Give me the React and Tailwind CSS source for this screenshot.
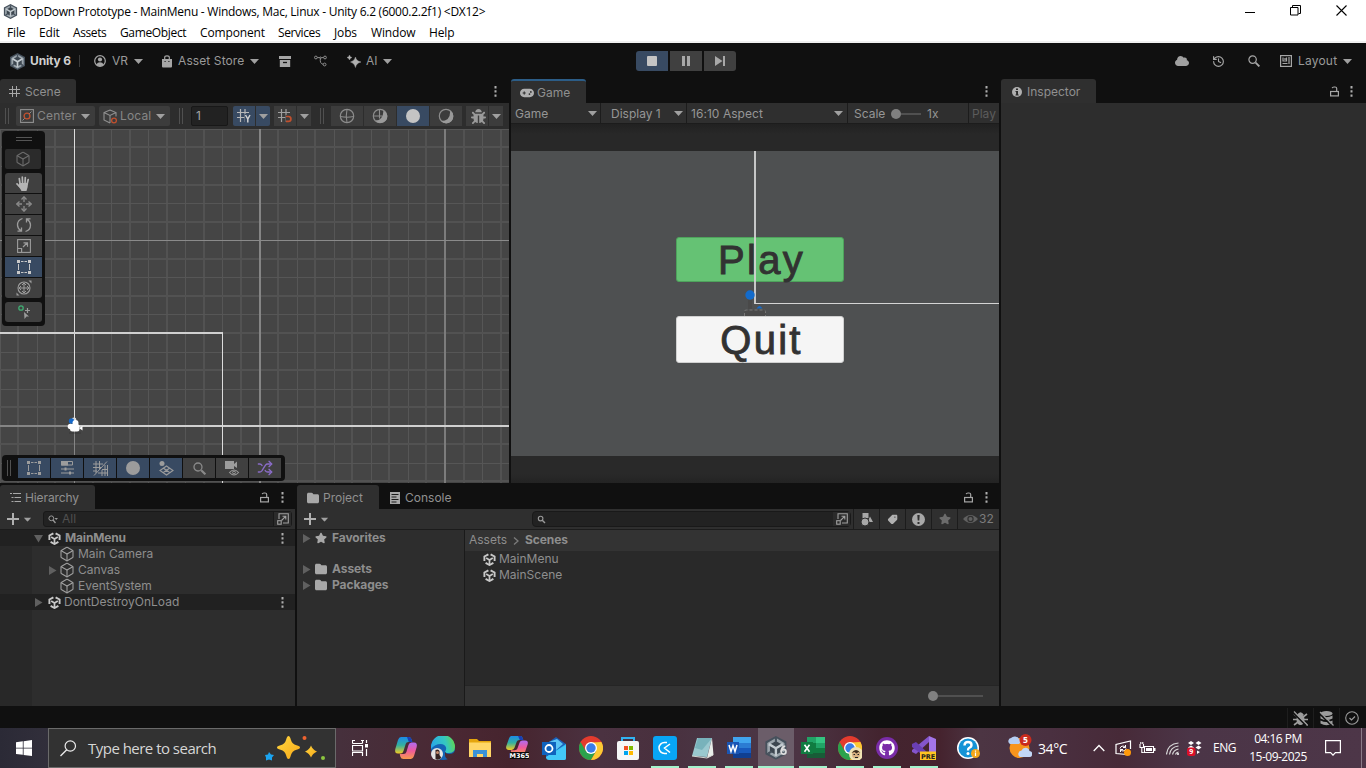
import React from "react";
import { FaHandPaper, FaGithub, FaBug, FaStar, FaCloud } from "react-icons/fa";
import { FaGamepad, FaFolder, FaTag } from "react-icons/fa6";
import { History, Shuffle, Box } from "lucide-react";

function Svg({ w = 16, h = w, vb, className = "", children }) {
  return (
    <svg width={w} height={h} viewBox={vb || `0 0 ${w} ${h}`} fill="none" stroke="none" className={"block shrink-0 " + className}>
      {children}
    </svg>
  );
}

/* A fixed-width slot in a horizontal bar. */
function Slot({ className = "", children }) {
  return <div className={"flex shrink-0 items-center whitespace-nowrap " + className}>{children}</div>;
}

const Caret = ({ className = "" }) => (
  <Svg w={9} h={5} className={className}><path d="M0 0h9L4.5 5z" fill="#a0a0a0" /></Svg>
);
const Kebab = () => (
  <Svg w={3} h={11}><path d="M.5 0h2v2.400h-2zM.5 4.200h2v2.400h-2zM.5 8.400h2v2.400h-2z" fill="#adadad" /></Svg>
);
const Lock = () => (
  <Svg w={9} h={11}>
    <rect x=".6" y="5.5" width="7.8" height="4.4" stroke="#a6a6a6" strokeWidth="1.2" />
    <path d="M6.700 5V2.600Q6.700 1 5 1H4Q2.400 1 2.200 2.200" stroke="#a6a6a6" strokeWidth="1.2" />
  </Svg>
);
const Cube = ({ w = 16, c = "#a0a0a0", className = "-ml-px" }) => <Box width={w} height={w} color={c} strokeWidth={1.6} className={"block shrink-0 " + className} />;
const UnityMark = () => (
  <Svg w={13}>
    <path d="M5.400 1.300L1.400 3.500v4.600M7.600 1.300L11.600 3.500v4.600M2.600 9.900l3.900 2.100 3.900-2.100" stroke="#c8c8c8" strokeWidth="1.900" />
    <path d="M6.500 6.900V12M6.500 6.900L3.200 5M6.500 6.900L9.800 5" stroke="#c8c8c8" strokeWidth="1.700" />
  </Svg>
);
const Fold = ({ open }) => (
  <Svg w={9} h={9}><path d={open ? "M0 1h9L4.5 8.5z" : "M1 0v9L8.5 4.5z"} fill="#606060" /></Svg>
);
const Magnifier = ({ w = 12, c = "#a6a6a6" }) => (
  <Svg w={w} vb="0 0 12 12">
    <circle cx="4.6" cy="4.6" r="3.7" stroke={c} strokeWidth="1.2" />
    <path d="M7.600 7.600l3.800 3.800" stroke={c} strokeWidth="1.9" />
  </Svg>
);
const PopOut = () => (
  <Svg w={12}>
    <path d="M2 6V.7h9.300V10H6" stroke="#a0a0a0" strokeWidth="1.1" />
    <rect x=".7" y="7.7" width="3.5" height="3.5" stroke="#a0a0a0" strokeWidth="1.1" />
    <path d="M4.500 7.500L8.600 3.400M5.500 3.200h3.300v3.300" stroke="#a0a0a0" strokeWidth="1.1" />
  </Svg>
);
const Plus = () => <Svg w={12}><path d="M5 0h2v5h5v2H7v5H5V7H0V5h5z" fill="#b0b0b0" /></Svg>;
const HandleV = () => <Svg w={4} h={16}><path d="M.5 0v16M3.500 0v16" stroke="#505050" /></Svg>;
const RectTool = ({ c = "#c8c8c8" }) => (
  <Svg w={14}>
    <path d="M0 0h3v3H0zM11 0h3v3h-3zM0 11h3v3H0zM11 11h3v3h-3z" fill={c} />
    <path d="M4 1.500h2.500M7.500 1.500H10M4 12.500h2.500M7.500 12.500H10M1.500 4v6M12.500 4v6" stroke={c} />
  </Svg>
);
const HexLogo = ({ w = 17, six }) => (
  <Svg w={w} vb="0 0 17 17">
    <path d="M8.500 0L16 4v9l-7.500 4L1 13V4z" fill="#46515c" />
    <path d="M8.500 2.500L13.700 5.500v6L8.500 14.500L3.300 11.500v-6z" fill="#3c464f" stroke="#9ba5ac" strokeWidth="1.900" />
    <path d="M8.500 8.700v5.600M8.500 8.700L3.500 5.800M8.500 8.700l5-2.900" stroke="#c3cbd0" strokeWidth="1.700" />
    <path d="M8.500 1.500v3M3 12.500l2.500-1.500M14 12.500l-2.500-1.500" stroke="#46515c" strokeWidth="1.500" />
    {six && <circle cx="14" cy="11.300" r="1.700" stroke="#dedede" strokeWidth="1.200" />}
    {six && <path d="M12.300 11.200Q12.400 7.600 15.200 7.200" stroke="#dedede" strokeWidth="1.200" />}
  </Svg>
);

function TitleBar() {
  return (
    <div className="flex h-[23px] shrink-0 items-center bg-white pl-[3px] font-['Open_Sans',sans-serif] text-[12px] text-black">
      <Slot className="w-[20px]"><HexLogo w={15} /></Slot>
      <Slot className="w-[1220px] pt-px text-[12px] tracking-[-0.260px]">TopDown Prototype - MainMenu - Windows, Mac, Linux - Unity 6.2 (6000.2.2f1) &lt;DX12&gt;</Slot>
      <Slot className="ml-[2px] w-[45px]"><Svg w={10} h={10}><path d="M0 5.500h10" stroke="#000" /></Svg></Slot>
      <Slot className="w-[46px]">
        <Svg w={11} className="-mt-[2px]"><path d="M.5 2.500h7.500v7.500H.5zM2.500 2.500v-2h8v8H8.500" stroke="#000" /></Svg>
      </Slot>
      <Slot><Svg w={11} className="-mt-[2px]"><path d="M.5.5l10 10M10.500.5l-10 10" stroke="#000" strokeWidth="1.100" /></Svg></Slot>
    </div>
  );
}

function MenuBar() {
  return (
    <div className="flex h-[20px] shrink-0 items-center border-b-2 border-[#f0f0f0] bg-white pl-[7px] pt-[2px] font-['Open_Sans',sans-serif] text-[12px] tracking-[-0.150px] text-black">
      <Slot className="w-[32px]">File</Slot>
      <Slot className="w-[34px]">Edit</Slot>
      <Slot className="w-[47px] tracking-[-0.400px]">Assets</Slot>
      <Slot className="w-[80px] tracking-[-0.350px]">GameObject</Slot>
      <Slot className="w-[78px]">Component</Slot>
      <Slot className="w-[56px] tracking-[-0.400px]">Services</Slot>
      <Slot className="w-[37px]">Jobs</Slot>
      <Slot className="w-[58px]">Window</Slot>
      <Slot>Help</Slot>
    </div>
  );
}

function MainToolbar() {
  return (
    <div className="flex h-9 shrink-0 items-center bg-[#101010] pl-[9px] text-[12px] text-[#9a9a9a]">
      <Slot className="w-[21px]"><HexLogo /></Slot>
      <Slot className="w-[49px] text-[12px] font-bold tracking-[-0.150px] text-[#cfcfcf]">Unity 6</Slot>
      <Slot className="w-[15px]"><div className="h-3 w-px bg-[#3c3c3c]" /></Slot>
      <Slot className="w-[18px]">
        <Svg w={12}>
          <circle cx="6" cy="6" r="5.300" stroke="#a6a6a6" strokeWidth="1.200" />
          <circle cx="6" cy="4.500" r="2.100" fill="#a6a6a6" />
          <path d="M2.300 9.500Q3.500 7.300 6 7.300t3.700 2.200Q8 11.300 6 11.300T2.300 9.500z" fill="#a6a6a6" />
        </Svg>
      </Slot>
      <Slot className="w-[22px]">VR</Slot>
      <Slot className="w-[28px]"><Caret /></Slot>
      <Slot className="w-[16px]">
        <Svg w={10} h={13}>
          <path d="M0 4h10v7.500q0 1-1 1H1q-1 0-1-1z" fill="#a6a6a6" />
          <path d="M2.700 5V2.300Q2.700.8 5 .8t2.300 1.500V5" stroke="#a6a6a6" strokeWidth="1.200" />
          <path d="M2.500 6.500h1.200M6.300 6.500h1.200" stroke="#222" />
        </Svg>
      </Slot>
      <Slot className="w-[72px] tracking-[0.100px]">Asset Store</Slot>
      <Slot className="w-[29px]"><Caret /></Slot>
      <Slot className="w-[35px]">
        <Svg w={12} h={11}><path d="M0 0h12v3H0zM.8 4h10.400v7H.8z" fill="#a6a6a6" /><path d="M4 6.500h4" stroke="#161616" strokeWidth="1.300" /></Svg>
      </Slot>
      <Slot className="w-[33px]">
        <Svg w={13} h={12}>
          <g stroke="#8e8e8e"><circle cx="1.900" cy="2.500" r="1.400" /><circle cx="11" cy="2.500" r="1.400" /><circle cx="10.600" cy="9.500" r="1.400" /><circle cx="6.500" cy="2.800" r=".8" /><path d="M3.300 2.600h2.500M7.300 2.600h2.300M6.400 3.500Q5.500 8.500 9.200 9.300" /></g>
        </Svg>
      </Slot>
      <Slot className="w-[19px]">
        <Svg w={14} h={13}>
          <path d="M8.500 2q.7 4 5.500 5-4.800 1-5.500 5.500Q7.600 8 3.500 7q4.100-1 5-5zM2.500 0q.3 2 2.400 2.500Q2.800 3 2.500 5 2.200 3 0 2.500 2.200 2 2.500 0z" fill="#b0b0b0" stroke="#b0b0b0" strokeWidth=".4" />
        </Svg>
      </Slot>
      <Slot className="w-[17px]">AI</Slot>
      <Slot className="w-[253px]"><Caret /></Slot>
      <Slot className="h-5 w-8 justify-center rounded-l-[3px] bg-[#384a62]"><div className="h-[10px] w-[10px] rounded-[1px] bg-[#c4c4c4]" /></Slot>
      <Slot className="ml-[2px] h-5 w-8 justify-center gap-[2px] bg-[#404040]">
        <div className="h-[10px] w-[3px] bg-[#a8a8a8]" /><div className="h-[10px] w-[3px] bg-[#a8a8a8]" />
      </Slot>
      <Slot className="ml-[2px] h-5 w-8 justify-center rounded-r-[3px] bg-[#404040]">
        <Svg w={10} h={10}><path d="M0 0l7.500 5L0 10zM8 0h2v10H8z" fill="#a8a8a8" /></Svg>
      </Slot>
      <Slot className="ml-[439px] w-[37px]"><FaCloud size={14} color="#a0a0a0" /></Slot>
      <Slot className="w-[36px]"><History size={13} color="#a6a6a6" strokeWidth={2.100} /></Slot>
      <Slot className="w-[32px]"><Magnifier /></Slot>
      <Slot className="w-[18px]">
        <Svg w={12}>
          <rect x=".6" y=".6" width="10.800" height="10.800" stroke="#a6a6a6" strokeWidth="1.200" />
          <path d="M3 2.500v3.500h3.500V2.500M9 2v7M2.500 8.500h5M5 3v2" stroke="#a6a6a6" strokeWidth="1.200" />
        </Svg>
      </Slot>
      <Slot className="w-[45px] tracking-[0.200px]">Layout</Slot>
      <Caret />
    </div>
  );
}

const Wire = ({ kind }) => (
  <Svg w={16}>
    {kind === "fill" ? <circle cx="8" cy="8" r="7" fill="#c4c4c4" /> : <circle cx="8" cy="8" r="6.700" stroke="#8c8c8c" strokeWidth="1.200" />}
    {kind === "wire" && <path d="M1.500 8.500Q8 10 14.500 8.500M8 1.500Q6.500 8 8 14.500" stroke="#8c8c8c" strokeWidth="1.100" />}
    {kind === "shade" && <path d="M11.500 2.500A6.600 6.600 0 1 1 3.500 12.500Q11 12.500 11.500 2.500z" fill="#9a9a9a" />}
    {kind === "shade" && <path d="M1.500 8h9M7.500 1.500v9" stroke="#8c8c8c" strokeWidth="1.100" />}
    {kind === "ball" && <path d="M12 2.500A7 7 0 1 1 3 13Q13 13 12 2.500z" fill="#9a9a9a" />}
  </Svg>
);

const hash = "M3.500 0v13M8 0v13M0 3.500h12M0 8.500h12";

function SceneToolbar() {
  const btn = "h-5 bg-[#3c3c3c] justify-center ";
  return (
    <div className="flex h-[26px] shrink-0 items-center bg-[#2d2d2d] pl-[5px] text-[12px] text-[#868686]">
      <Slot className="w-[11px]"><HandleV /></Slot>
      <Slot className="h-5 w-[79px] rounded-[2px] bg-[#3c3c3c] pl-1">
        <Svg w={14}>
          <rect x=".6" y=".6" width="12.800" height="12.800" stroke="#909090" strokeWidth="1.100" />
          <circle cx="7" cy="7" r="2.900" stroke="#c0502e" strokeWidth="1.400" />
          <path d="M2.500 11.500l2.200-2.200M9.300 4.700l2.200-2.200" stroke="#909090" />
        </Svg>
        <span className="ml-[3px] w-[44px] tracking-[0.200px]">Center</span><Caret />
      </Slot>
      <Slot className="ml-1 h-5 w-[71px] rounded-[2px] bg-[#3c3c3c] pl-1">
        <Svg w={15}>
          <path d="M7 1l6 2.600v4M7 1L1 3.600V11l6 3M1 3.600L7 6.500l6-2.900M7 6.500V14" stroke="#909090" strokeWidth="1.100" />
          <circle cx="11" cy="11.500" r="2.400" stroke="#c0502e" strokeWidth="1.300" />
        </Svg>
        <span className="ml-[2px] w-[36px] tracking-[0.150px]">Local</span><Caret />
      </Slot>
      <Slot className="ml-[9px] w-[12px]"><HandleV /></Slot>
      <Slot className="h-5 w-[37px] rounded-[2px] border border-[#181818] bg-[#222] pl-1 text-[#a5a5a5]">1</Slot>
      <Slot className="ml-[5px] h-5 w-[22px] justify-center rounded-l-[2px] bg-[#384a62]">
        <Svg w={14}><path d={hash} stroke="#b8b8b8" strokeWidth="1.200" /><path d="M7.500 5h6.500v9H7.500z" fill="#384a62" /><path d="M8.500 6l2.300 4L13 6M10.800 10v3.500" stroke="#d0d0d0" strokeWidth="1.500" /></Svg>
      </Slot>
      <Slot className="ml-px h-5 w-[14px] justify-center rounded-r-[2px] bg-[#384a62]"><Caret /></Slot>
      <Slot className={btn + "ml-1 w-[22px]"}>
        <Svg w={14}><path d={hash} stroke="#a0a0a0" strokeWidth="1.200" /><path d="M7.500 6H14v8H7.500z" fill="#3c3c3c" /><path d="M8 7.500h2.500a2.200 2.200 0 0 1 0 4.800H8" stroke="#c0502e" strokeWidth="1.700" /></Svg>
      </Slot>
      <Slot className={btn + "ml-px w-[14px]"}><Caret /></Slot>
      <Slot className="ml-[9px] w-[11px]"><HandleV /></Slot>
      <Slot className={btn + "w-8"}><Wire kind="wire" /></Slot>
      <Slot className={btn + "ml-px w-8"}><Wire kind="shade" /></Slot>
      <Slot className="ml-px h-5 w-8 justify-center bg-[#384a62]"><Wire kind="fill" /></Slot>
      <Slot className={btn + "ml-px w-8"}><Wire kind="ball" /></Slot>
      <Slot className={btn + "ml-1 w-[22px] pl-[3px]"}><FaBug size={15} color="#9a9a9a" /></Slot>
      <Slot className={btn + "ml-px w-[14px]"}><Caret /></Slot>
    </div>
  );
}

function SceneGrid() {
  const lines = [];
  for (let i = -4; i < 24; i++) {
    const x = 74 + i * 18.55;
    if (i !== 0 && i !== 10 && i !== 20) lines.push(<rect key={"v" + i} x={Math.round(x) - (i % 2 ? 1 : 0)} y="129" width={i % 2 ? 2 : 1} height="354" fill={i % 2 ? "#525252" : "#565656"} />);
  }
  for (let j = -3; j < 17; j++) {
    const y = 425.7 - j * 18.55;
    if (j !== 0 && j !== 10) lines.push(<rect key={"h" + j} x="0" y={Math.round(y) - (j % 2 ? 1 : 0)} width="509" height={j % 2 ? 2 : 1} fill={j % 2 ? "#525252" : "#565656"} />);
  }
  return (
    <svg width="509" height="354" viewBox="0 129 509 354" className="absolute inset-0" shapeRendering="crispEdges">
      <rect x="0" y="129" width="509" height="354" fill="#454545" />
      {lines}
      <rect x="259" y="129" width="2" height="354" fill="#858585" />
      <rect x="444" y="129" width="2" height="354" fill="#7c7c7c" />
      <rect x="0" y="240" width="509" height="1" fill="#8a8a8a" />
      <rect x="0" y="425" width="74" height="2" fill="#858585" />
      <rect x="74" y="426" width="1" height="57" fill="#858585" />
      <rect x="74" y="129" width="1" height="297" fill="#dcdcdc" />
      <rect x="74" y="425" width="435" height="2" fill="#d0d0d0" />
      <rect x="0" y="332" width="223" height="2" fill="#d0d0d0" />
      <rect x="222" y="333" width="1" height="150" fill="#dcdcdc" />
      <g shapeRendering="auto">
        <circle cx="74" cy="420" r="2.400" fill="#ddd" /><circle cx="71.500" cy="421" r="2.700" fill="#1769c9" />
        <circle cx="75.500" cy="423" r="3" fill="#fff" /><circle cx="70.500" cy="426.500" r="2.800" fill="#fff" />
        <rect x="70" y="424" width="9.500" height="7.500" rx="2.500" fill="#fff" /><path d="M79 428l3.500-2v4.500z" fill="#fff" />
        <path d="M69 433h12" stroke="#333" strokeWidth="1" opacity=".6" />
      </g>
    </svg>
  );
}

const toolBtn = "h-5 w-[37px] justify-center ";
const g = "#9c9c9c";

function ToolPalette() {
  return (
    <div className="absolute left-[2px] top-[2px] flex h-[195px] w-[43px] flex-col items-start rounded-[4px] bg-[#101010] pl-[3px]">
      <Svg w={16} h={4} className="ml-[11px] mt-[6px]"><path d="M0 .5h16M0 3.500h16" stroke="#555" /></Svg>
      <Slot className="mt-[8px] h-5 w-9 justify-center rounded-[2px] bg-[#2b2b2b]"><Cube c="#6c6c6c" className="" /></Slot>
      <div className="mt-1 flex flex-col gap-px">
        <Slot className={toolBtn + "rounded-t-[3px] bg-[#404040]"}>
          <Svg w={15}>
            <path d="M4.200 8.500L3.300 2.500M6.600 7.500L6.300 1.200M9 7.500L9.300 1.500M11 8.500L12.200 3.500M3.500 10.500L1 7.800" stroke="#b4b4b4" strokeWidth="1.700" strokeLinecap="round" />
            <path d="M3.400 7h8.600q0 4.500-1.500 8H5.500Q4.500 13 2.500 10.500z" fill="#b4b4b4" />
          </Svg>
        </Slot>
        <Slot className={toolBtn + "bg-[#404040]"}>
          <Svg w={16}><path d="M8 2v4M8 10v4M2 8h4M10 8h4" stroke="#8c8c8c" strokeWidth="1.300" /><path d="M5.500 3.500L8 .8l2.500 2.700M5.500 12.500L8 15.200l2.500-2.700M3.500 5.500L.8 8l2.700 2.500M12.500 5.500L15.200 8l-2.700 2.500" stroke="#8c8c8c" strokeWidth="1.300" /></Svg>
        </Slot>
        <Slot className={toolBtn + "bg-[#404040]"}>
          <Svg w={16}><path d="M6.500 1.500Q1.500 3 1.500 8q0 3.500 3.500 5.800M9.500 14.500q5-1.500 5-6.500 0-3.500-3.500-5.800M1.500 14.200h4V10.500M14.500 1.800h-4v3.700" stroke={g} strokeWidth="1.300" /></Svg>
        </Slot>
        <Slot className={toolBtn + "bg-[#404040]"}>
          <Svg w={14}><rect x=".6" y=".6" width="12.800" height="12.800" stroke={g} strokeWidth="1.100" /><path d="M.6 9.500h4v4M6 8l4-4M6.500 3.800h4v4" stroke={g} strokeWidth="1.200" /></Svg>
        </Slot>
        <Slot className={toolBtn + "bg-[#384a62]"}><RectTool /></Slot>
        <Slot className={toolBtn + "rounded-b-[3px] bg-[#404040]"}>
          <Svg w={16}><circle cx="8" cy="8" r="6" stroke={g} strokeWidth="1.100" /><path d="M8 3v10M3 8h10M6 5l2-2 2 2M6 11l2 2 2-2M5 6L3 8l2 2M11 6l2 2-2 2" stroke={g} /><path d="M12.500.5h3v3zM.5 12.500v3h3z" fill={g} /></Svg>
        </Slot>
      </div>
      <Slot className={toolBtn + "mt-1 rounded-[3px] bg-[#404040]"}>
        <Svg w={14}><circle cx="4" cy="3" r="2.200" stroke="#3fae73" strokeWidth="1.300" /><path d="M10.500 3v5M8 5.500h5" stroke={g} strokeWidth="1.200" /><path d="M7 7l5 4.500H9.500L7.500 14z" fill={g} /></Svg>
      </Slot>
    </div>
  );
}

function OverlayBar() {
  const b = "h-5 w-8 justify-center ";
  const on = b + "bg-[#384a62]";
  const off = b + "bg-[#404040]";
  return (
    <div className="absolute bottom-[2px] left-[2px] flex h-[26px] w-[283px] items-center gap-px rounded-[4px] bg-[#101010] pl-[5px]">
      <Slot className="w-[10px]"><HandleV /></Slot>
      <Slot className={on}><RectTool c={g} /></Slot>
      <Slot className={on}><Svg w={13} h={14}><path d="M.5.5h11v3.500H.5z" stroke={g} /><path d="M0 0h7v4.500H0z" fill={g} /><path d="M0 8h13M0 12h13" stroke={g} /><path d="M3.500 6.500h2v3h-2zM8 10.500h2v3H8z" fill={g} /></Svg></Slot>
      <Slot className={on}><Svg w={15}><path d="M3 0v12M6.500 0v8M0 3h10M0 6.500h8M0 10h4M9 9v6M12 4v11M14.500 4v11M5 12h10M9 8.500h6M1 14.500L14 .5" stroke={g} strokeWidth="1" /></Svg></Slot>
      <Slot className={on}><Svg w={14}><circle cx="7" cy="7" r="7" fill={g} /></Svg></Slot>
      <Slot className={on}><Svg w={15}><circle cx="3" cy="2.500" r="2.500" fill={g} /><path d="M7.500 5L14 9.500 7.500 14 1 9.500zM4.500 7.300l6.500 4.500M10.500 7.300L4 11.800" stroke={g} strokeWidth="1.100" /></Svg></Slot>
      <Slot className={off}><Magnifier w={13} c="#8a8a8a" /></Slot>
      <Slot className={off}><Svg w={15}><path d="M0 0h9v3l3-2.500v6.500L9 5v3H0z" fill={g} /><path d="M4.500 11.500q4.500-5 9 0-4.500 5-9 0z" fill="#404040" stroke={g} strokeWidth="1.100" /><circle cx="9" cy="11.500" r="1.400" stroke={g} /></Svg></Slot>
      <Slot className={off + " pr-px"}><Shuffle size={16} color="#8a6cc8" strokeWidth={2} /></Slot>
    </div>
  );
}

function Tab({ className = "", children }) {
  return <Slot className={"h-6 rounded-t-[3px] bg-[#2f2f2f] pt-px text-[12px] text-[#909090] " + className}>{children}</Slot>;
}

function ScenePanel() {
  return (
    <div className="flex w-[509px] flex-col">
      <div className="flex h-6 items-center">
        <Tab className="w-[76px] pl-[9px]">
          <Svg w={11} className="mr-[5px]"><path d="M3.500 0v11M7.500 0v11M0 3.500h11M0 7.500h11" stroke="#a8a8a8" /></Svg>Scene
        </Tab>
        <Slot className="ml-[418px]"><Kebab /></Slot>
      </div>
      <SceneToolbar />
      <div className="relative h-[354px]"><SceneGrid /><ToolPalette /><OverlayBar /></div>
    </div>
  );
}

function GamePanel() {
  const cell = "h-5 border-r border-[#1c1c1c] pt-px ";
  return (
    <div className="flex w-[488px] flex-col overflow-hidden">
      <div className="flex h-6 items-center">
        <Tab className="w-[75px] border-t-2 border-[#2c5d87] pl-[9px]"><FaGamepad size={14} color="#b0b0b0" className="mr-[3px]" />Game</Tab>
        <Slot className="ml-[399px]"><Kebab /></Slot>
      </div>
      <div className="flex h-5 shrink-0 items-center bg-[#2f2f2f] text-[12px] text-[#969696]">
        <Slot className={cell + "w-[90px] pl-1"}><span className="w-[73px]">Game</span><Caret /></Slot>
        <Slot className={cell + "w-[86px] pl-[10px]"}><span className="w-[63px]">Display 1</span><Caret /></Slot>
        <Slot className={cell + "w-[161px] pl-1"}><span className="w-[143px] tracking-[0.050px]">16:10 Aspect</span><Caret /></Slot>
        <Slot className={cell + "w-[121px] pl-[6px]"}>
          <span className="w-[37px]">Scale</span>
          <div className="h-[10px] w-[10px] rounded-full bg-[#808080]" /><div className="h-[2px] w-5 bg-[#505050]" />
          <span className="ml-[6px]">1x</span>
        </Slot>
        <Slot className="pl-[3px] pt-px text-[#5c5c5c]">Play</Slot>
      </div>
      <div className="h-[28px] border-t border-[#1c1c1c] bg-[linear-gradient(#212121,#282828_10px)]" />
      <div className="relative flex h-[305px] flex-col items-center bg-[#4e5051] pl-[10px] pt-[86px] font-['Liberation_Sans',Arial,sans-serif] text-[40px] leading-none tracking-[2.300px] text-[#323232]">
        <div className="flex h-[45px] w-[168px] items-center justify-center rounded-[3px] border border-[#4ea35c] bg-[#65c274] pl-[3px] pt-px [-webkit-text-stroke:0.9px_#323232]">Play</div>
        <div className="mt-[34px] flex h-[47px] w-[168px] items-center justify-center rounded-[3px] border border-[#d0d0d0] bg-[#f5f5f5] pl-[3px] [-webkit-text-stroke:0.9px_#323232]">Quit</div>
        <svg width="488" height="305" viewBox="511 151 488 305" className="absolute inset-0">
          <rect x="754" y="151" width="2" height="153" fill="#d4d4d4" opacity=".9" />
          <rect x="755" y="303" width="244" height="1" fill="#d4d4d4" />
          <circle cx="750" cy="295" r="4.700" fill="#136bcb" />
          <path d="M756.500 308.500q3-5 6 0z" fill="#136bcb" />
          <path d="M750 300v9" stroke="#494949" strokeWidth="4" />
          <path d="M744.500 316v-4.500q0-1.500 2-1.500h17q2 0 2 1.500v4.500" stroke="#777" strokeDasharray="3 2" fill="#4a4a4a" />
        </svg>
      </div>
      <div className="h-[27px] bg-[linear-gradient(#292929_18px,#232323)]" />
    </div>
  );
}

function HierarchyRow({ children, dark, kebab }) {
  return (
    <div className={"flex h-4 shrink-0 items-center text-[12px] " + (dark ? "bg-[#212121]" : "bg-[linear-gradient(90deg,#282828_32px,#2d2d2d_32px)]")}>
      <div className="flex w-[281px] items-center whitespace-nowrap">{children}</div>
      {kebab && <Kebab />}
    </div>
  );
}

function Hierarchy() {
  return (
    <div className="flex w-[295px] flex-col text-[#8e8e8e]">
      <div className="flex h-6 items-center">
        <Tab className="w-[95px] pl-[10px]">
          <Svg w={11} h={9} className="mr-[4px]"><path d="M0 .5h2M3 .5h8M1.500 4.500h2M4.500 4.500H11M1.500 8.500h2M4.500 8.500H11" stroke="#a8a8a8" strokeWidth="1.200" /></Svg><span className="tracking-[-0.100px]">Hierarchy</span>
        </Tab>
        <Slot className="ml-[165px] w-[21px] pt-px"><Lock /></Slot><Kebab />
      </div>
      <div className="flex h-[21px] shrink-0 items-center border-b border-[#1c1c1c] bg-[#2f2f2f] pl-[7px]">
        <Slot className="w-4"><Plus /></Slot><Slot className="w-[20px]"><Caret className="scale-[.85]" /></Slot>
        <Slot className="h-4 w-[249px] rounded-[3px] border border-[#191919] bg-[#222] pl-1 text-[12px] text-[#505050]">
          <Svg w={10} h={9}><circle cx="3.300" cy="3.300" r="2.400" stroke="#999" /><path d="M5 5l2.500 3" stroke="#999" strokeWidth="1.300" /><path d="M6.500 3H10L8.200 5z" fill="#999" /></Svg>
          <span className="ml-[4px] w-[211px]">All</span>
          <div className="flex h-[14px] w-[18px] items-center justify-center border-l border-[#191919] bg-[#2b2b2b]"><PopOut /></div>
        </Slot>
      </div>
      <HierarchyRow dark kebab>
        <Slot className="w-[48px] pl-[34px]"><Fold open /></Slot><Slot className="w-[17px]"><UnityMark /></Slot><span className="font-bold tracking-[-0.150px]">MainMenu</span>
      </HierarchyRow>
      <HierarchyRow><Slot className="ml-[60px] w-[18px]"><Cube /></Slot>Main Camera</HierarchyRow>
      <HierarchyRow><Slot className="ml-[48px] w-[12px]"><Fold /></Slot><Slot className="w-[18px]"><Cube /></Slot>Canvas</HierarchyRow>
      <HierarchyRow><Slot className="ml-[60px] w-[18px]"><Cube /></Slot>EventSystem</HierarchyRow>
      <HierarchyRow dark kebab>
        <Slot className="w-[48px] pl-[34px]"><Fold /></Slot><Slot className="w-[16px]"><UnityMark /></Slot>DontDestroyOnLoad
      </HierarchyRow>
      <div className="flex-1 bg-[linear-gradient(90deg,#282828_32px,#2d2d2d_32px)]" />
    </div>
  );
}

function Project() {
  const ic = "h-5 w-[26px] justify-center border-l border-[#1c1c1c]";
  return (
    <div className="flex w-[702px] flex-col text-[12px] text-[#8e8e8e]">
      <div className="flex h-6 items-center">
        <Tab className="w-[82px] pl-[10px]"><FaFolder size={12} color="#a8a8a8" className="mr-[4px]" />Project</Tab>
        <Slot className="w-[582px] pl-[11px] pt-px text-[#909090]">
          <Svg w={10} h={12} className="mr-[5px]"><path d="M0 0h10v12H0z" fill="#a8a8a8" /><path d="M1.500 2.500h7M1.500 5h5M1.500 7.500h7M1.500 10h5" stroke="#1a1a1a" /></Svg>Console
        </Slot>
        <Slot className="ml-[3px] w-[21px] pt-px"><Lock /></Slot><Kebab />
      </div>
      <div className="flex h-[21px] shrink-0 items-center border-b border-[#1c1c1c] bg-[#2f2f2f] pl-[7px]">
        <Slot className="w-4"><Plus /></Slot><Slot className="w-[212px]"><Caret className="scale-[.85]" /></Slot>
        <Slot className="h-4 w-[319px] rounded-[4px] border border-[#191919] bg-[#222] pl-1">
          <Svg w={9} className="mr-[287px]"><circle cx="3.600" cy="3.600" r="2.300" stroke="#999" strokeWidth="1.100" /><path d="M5 5l3 3" stroke="#999" strokeWidth="1.400" /></Svg>
          <div className="flex h-[14px] w-[17px] items-center justify-center bg-[#2b2b2b]"><PopOut /></div>
        </Slot>
        <Slot className={ic + " ml-[2px]"}><Svg w={12} h={13}><path d="M1.500 0h6v5h-6z" fill="#a8a8a8" /><path d="M9 3.500l3 5.500H6.500z" fill="#a8a8a8" /><circle cx="4" cy="9" r="4" fill="#a8a8a8" stroke="#2f2f2f" /></Svg></Slot>
        <Slot className={ic}><FaTag size={11} color="#b0b0b0" className="rotate-90" /></Slot>
        <Slot className={ic}><Svg w={13}><circle cx="6.500" cy="6.500" r="6.500" fill="#a8a8a8" /><path d="M5.300 2h2.400L7.300 7.500H5.700zM5.500 9h2v2h-2z" fill="#2f2f2f" /></Svg></Slot>
        <Slot className={ic}><FaStar size={12} color="#6c6c6c" /></Slot>
        <Slot className="h-5 border-l border-[#1c1c1c] pl-[5px] text-[#7c7c7c]">
          <Svg w={15} h={10}><path d="M0 5q7.500-8 15 0-7.500 8-15 0z" fill="#606060" /><circle cx="7.500" cy="5" r="3.200" fill="#2f2f2f" /><circle cx="7.500" cy="5" r="2" fill="#606060" /></Svg>
          <span className="ml-[1px]">32</span>
        </Slot>
      </div>
      <div className="flex flex-1">
        <div className="flex w-[168px] flex-col border-r border-[#1a1a1a] bg-[#2d2d2d] pl-[5px] font-bold tracking-[-0.080px]">
          <div className="mb-[15px] flex h-4 items-center"><Slot className="w-[13px]"><Fold /></Slot><Slot className="w-[17px]"><FaStar size={12} color="#a8a8a8" /></Slot>Favorites</div>
          <div className="flex h-4 items-center"><Slot className="w-[13px]"><Fold /></Slot><Slot className="w-[17px]"><FaFolder size={12} color="#a8a8a8" /></Slot>Assets</div>
          <div className="flex h-4 items-center"><Slot className="w-[13px]"><Fold /></Slot><Slot className="w-[17px]"><FaFolder size={12} color="#a8a8a8" /></Slot>Packages</div>
        </div>
        <div className="flex flex-1 flex-col bg-[#292929]">
          <div className="flex h-[21px] items-center bg-[#333] pb-[2px] pl-1">
            <Slot className="w-[44px]">Assets</Slot>
            <Slot className="w-[12px] pt-[2px]"><Svg w={6} h={8}><path d="M1 .5L5 4 1 7.500" stroke="#7c7c7c" strokeWidth="1.300" /></Svg></Slot>
            <span className="font-bold tracking-[-0.080px]">Scenes</span>
          </div>
          <div className="flex h-4 items-center pl-[18px]"><Slot className="w-[16px]"><UnityMark /></Slot>MainMenu</div>
          <div className="flex h-4 items-center pl-[18px]"><Slot className="w-[16px]"><UnityMark /></Slot>MainScene</div>
          <div className="mt-auto flex h-[21px] items-center border-t border-[#252525] bg-[#333] pl-[463px]">
            <div className="h-[10px] w-[10px] shrink-0 rounded-full bg-[#808080]" /><div className="h-[2px] w-[45px] bg-[#505050]" />
          </div>
        </div>
      </div>
    </div>
  );
}

function Inspector() {
  return (
    <div className="flex w-[365px] flex-col">
      <div className="flex h-6 items-center">
        <Tab className="w-[95px] pl-[11px]">
          <Svg w={10} className="mr-[5px]"><circle cx="5" cy="5" r="5" fill="#b0b0b0" /><path d="M4 1.500h2v1.600H4zM3.500 4H6v3.500h.7v1H3.500v-1h.6V5h-.6z" fill="#2a2a2a" /></Svg>Inspector
        </Tab>
        <Slot className="ml-[234px] w-[20px]"><Lock /></Slot><Kebab />
      </div>
      <div className="flex-1 bg-[#2d2d2d]" />
    </div>
  );
}

function StatusBar() {
  const c = "h-5 w-[26px] justify-center border-l border-[#1e1e1e]";
  return (
    <div className="flex h-[22px] shrink-0 items-center justify-end bg-[#101010] pr-px pt-[2px]">
      <Slot className={c + " pr-px"}><Svg w={15}><ellipse cx="7.500" cy="8.500" rx="4" ry="5.500" fill={g} /><path d="M4 4Q7.500-1.500 11 4z" fill={g} /><path d="M0 8.500h15M1 3l4 3M14 3l-4 3M1 14l4-3M14 14l-4-3" stroke={g} strokeWidth="1.600" /><path d="M0 1.500l13 13" stroke="#101010" strokeWidth="1.600" /><path d="M1 .5l14 14" stroke={g} strokeWidth="1.200" /></Svg></Slot>
      <Slot className={c + " pr-px"}><Svg w={15}><ellipse cx="7.500" cy="2.500" rx="6" ry="2.400" fill={g} /><path d="M1.500 4.500Q7.500 8 13.500 4.500v3Q7.500 10.500 1.500 7.500zM1.500 9.500Q7.500 12.500 13.500 9.500v3Q7.500 16 1.500 12.500z" fill={g} /><path d="M0 2l13 13" stroke="#101010" strokeWidth="1.600" /><path d="M1 1l13.500 13.500" stroke={g} strokeWidth="1.200" /></Svg></Slot>
      <Slot className={c + " pr-px"}><Svg w={14}><circle cx="7" cy="7" r="6.300" stroke={g} strokeWidth="1.100" /><path d="M4.500 7l2 2 3.500-3.500" stroke={g} strokeWidth="1.200" /></Svg></Slot>
    </div>
  );
}

const Copilot = ({ id }) => (
  <>
    <defs>
      <linearGradient id={id + "a"} x1="0" y1="0" x2="0" y2="1"><stop offset="0" stopColor="#1b8be8" /><stop offset=".5" stopColor="#33b0a0" /><stop offset="1" stopColor="#f3cb22" /></linearGradient>
      <linearGradient id={id + "b"} x1="0" y1="0" x2="0" y2="1"><stop offset="0" stopColor="#b06bf2" /><stop offset=".5" stopColor="#ee5a9c" /><stop offset="1" stopColor="#f99a4c" /></linearGradient>
    </defs>
    <path d="M7 1h8q2 0 2.600 2.500l.7 2.500h-4q-2 0-2.600 2L9.500 15q-.7 2.500-3 2.500H4Q.3 17.500 1.300 13L4 4Q5 1 7 1z" fill={`url(#${id}a)`} />
    <path d="M17 23H9.500q-2.500 0-3.200-2.500L5.800 18h4q2 0 2.600-2l2.100-7q.7-2.500 3-2.500h2.500q3.700 0 2.700 4.500L20 20q-1 3-3 3z" fill={`url(#${id}b)`} />
    <path d="M13 1h2q2 0 2.600 2.500l.7 2.500h-3.500z" fill="#1a3fb5" />
  </>
);
const Chrome = () => (
  <>
    <circle cx="12" cy="12" r="12" fill="#e33b2e" />
    <path d="M1.600 6A12 12 0 0 0 12 24l5.200-9L12 12 6.800 15z" fill="#2ba24c" />
    <path d="M22.400 6A12 12 0 0 1 12 24l5.200-9L12 6.500z" fill="#fcc934" />
    <circle cx="12" cy="12" r="6" fill="#fff" /><circle cx="12" cy="12" r="4.700" fill="#3b7de8" />
  </>
);

function App24({ active, running, children }) {
  return (
    <div className="flex h-10 w-[37px] shrink-0 justify-center">
      <div className={"flex h-10 w-[36px] flex-col items-center " + (active ? "bg-[#6b5d69]" : "")}>
        <div className="mt-2 flex h-[30px]"><Svg w={24}>{children}</Svg></div>
        {running && <div className={"h-[2px] bg-[#a3f2cc] " + (active ? "w-[36px]" : "w-[28px]")} />}
      </div>
    </div>
  );
}

function Taskbar() {
  const t = "text-[12px] font-normal";
  return (
    <div className="flex h-10 shrink-0 items-center bg-[linear-gradient(90deg,#2b2a36_0px,#33303c_60px,#46303c_340px,#4a2833_450px,#46242e_510px,#4b3241_600px,#49303e_660px,#4a3645_720px,#4c3443_800px,#43242f_880px,#45232e_940px,#4c3543_980px,#4a3040_1050px,#472a38_1120px,#4b3547_1190px,#4d3648_1366px)] font-['Open_Sans',sans-serif] text-white">
      <Slot className="w-[48px] pl-4"><Svg w={16}><path d="M0 2.200L6.800 1.300v6.400H0zM7.600 1.200L16 0v7.700H7.600zM0 8.500h6.800v6.300L0 13.900zM7.600 8.500H16V16l-8.400-1.100z" fill="#fff" /></Svg></Slot>
      <Slot className="h-10 w-[288px] border border-[#6a6a6a] bg-[#323232] pl-[11px]">
        <Svg w={17}><circle cx="10.300" cy="6" r="5.200" stroke="#ececec" strokeWidth="1.200" /><path d="M6.700 9.700L.5 16" stroke="#ececec" strokeWidth="1.300" /></Svg>
        <span className="ml-[11px] w-[175px] text-[15px] tracking-[-0.520px] text-[#d6d6d6]">Type here to search</span>
        <Svg w={64} h={26}>
          <defs><linearGradient id="gold" x1="0" y1="0" x2="1" y2="1"><stop offset="0" stopColor="#ffd640" /><stop offset="1" stopColor="#f7a918" /></linearGradient></defs>
          <path d="M25.500 1q1.500 0 2.300 3.500 1.200 4.500 5.700 5.700 3.500.8 3.500 2.300t-3.500 2.300q-4.500 1.200-5.700 5.700-.8 3.500-2.300 3.500t-2.300-3.500q-1.200-4.500-5.700-5.700-3.500-.8-3.500-2.300t3.500-2.300q4.500-1.200 5.700-5.700Q24 1 25.500 1z" fill="url(#gold)" />
          <path d="M48 10.500q1.500 4 6 6-4.500 2-6 6-1.500-4-6-6 4.500-2 6-6z" fill="url(#gold)" />
          <path d="M6 17l2 2.500 3 .5-2 2.500v3l-3-1-3 1v-3L2 20l3-.5z" fill="#1ba4f0" />
          <circle cx="41.500" cy="3" r="2" fill="#ef6330" /><circle cx="60" cy="23" r="2" fill="#8cc63f" />
        </Svg>
      </Slot>
      <Slot className="w-[51px] pl-4"><Svg w={16}><path d="M0 .5h3M9 .5h3M.5 0v3.500M10.500 0v3.500M.5 3.500h10M.5 5.500h10v5.500H.5zM.5 16v-3.500h10V16M14.500 0v3M14.500 9v7" stroke="#fff" strokeWidth="1.200" /><path d="M13 4h3v3.500h-3z" fill="#fff" /></Svg></Slot>
      <App24><Copilot id="cp" /></App24>
      <App24>
        <defs><linearGradient id="edge" x1="0" y1=".5" x2="1" y2=".3"><stop offset="0" stopColor="#2aa7e8" /><stop offset=".6" stopColor="#35c8c0" /><stop offset="1" stopColor="#62d84a" /></linearGradient></defs>
        <circle cx="12" cy="12" r="12" fill="#1464b5" />
        <path d="M0 11A12 12 0 0 1 24 11q0 6-6.500 6-3.500 0-3.500-1.500 1.500-1.500 1-4Q14 8 9.500 8 4 8 0 13z" fill="url(#edge)" />
        <path d="M14 15.500q.5 2 4 2.500 3 .3 6-2.500-1 6-5 8.500-5-1-5-5z" fill="#472a35" />
        <circle cx="6" cy="18" r="6" fill="#e5e5e5" /><path d="M4.500 14q3-1.500 4 1v4l2 3q-4 3-6 1z" fill="#352322" /><circle cx="6.500" cy="16.500" r="1.500" fill="#c88e70" />
      </App24>
      <App24><path d="M1 3h8l2 2h12v16H1z" fill="#e5a50d" /><path d="M1 6.500h22V21H1z" fill="#ffd667" /><path d="M5 21v-7h14v7h-4v-3H9v3z" fill="#3a92d8" /></App24>
      <App24>
        <g transform="translate(0 -1) scale(1 .85)"><Copilot id="m3" /></g><path d="M5 16h19v7H5z" fill="#0b0b0b" />
        <text x="14.500" y="22" textAnchor="middle" fontSize="6.500" fontWeight="bold" fill="#fff" fontFamily="DejaVu Sans">M365</text>
      </App24>
      <App24><path d="M4 8L14 1l10 7v14H4z" fill="#1a5fb8" /><path d="M7 6l8-3 6 5-8 7z" fill="#5cc4f5" /><path d="M24 8v14q0 2-2 2H8l-4-3z" fill="#29b5ef" /><path d="M4 21L24 9v13q0 2-2 2H7q-3 0-3-3z" fill="#43c8f8" /><path d="M0 6h14v13H0z" fill="#0f62bd" /><circle cx="7" cy="12.500" r="3.500" stroke="#fff" strokeWidth="1.800" /></App24>
      <App24><Chrome /></App24>
      <App24><path d="M6 6V2h12v4" stroke="#31b3f2" strokeWidth="2" /><rect x="1" y="5" width="22" height="19" rx="2" fill="#f6f6f6" /><path d="M8 10h4v4H8z" fill="#f25022" /><path d="M13 10h4v4h-4z" fill="#7fba00" /><path d="M8 15h4v4H8z" fill="#00a4ef" /><path d="M13 15h4v4h-4z" fill="#ffb900" /></App24>
      <App24 running><rect width="24" height="24" rx="3" fill="#08a5f5" /><path d="M14 6.500H11.500a5.500 5.500 0 0 0 0 11H14M17 8l-5.500 4 5.500 4.500" stroke="#fff" strokeWidth="1.500" /></App24>
      <App24 running><path d="M7 2h15l-5 19L2 20z" fill="#9ac8cf" /><path d="M8 2h14L12 14 5 12z" fill="#69a8b2" opacity=".7" /><path d="M22 2l1.500 17-6.500 3z" fill="#e8edea" /><path d="M2 20l15 2 6-3" stroke="#d5d8d4" /></App24>
      <App24 running><path d="M6 1h18v6H6z" fill="#41a5ee" /><path d="M6 7h18v5H6z" fill="#2b7cd3" /><path d="M6 12h18v5H6z" fill="#185abd" /><path d="M6 17h18v5H6z" fill="#103f91" /><path d="M0 6h12v12H0z" fill="#1a56b5" /><path d="M2 9l2 6.500L6 9.500l2 6L10 9" stroke="#fff" strokeWidth="1.500" /></App24>
      <App24 active running><g transform="scale(1.400)"><HexLogo six /></g></App24>
      <App24 running><path d="M6 1h9v6H6z" fill="#21a366" /><path d="M15 1h9v6h-9z" fill="#33c481" /><path d="M6 7h9v5H6z" fill="#107c41" /><path d="M15 7h9v5h-9z" fill="#21a366" /><path d="M6 12h18v5H6z" fill="#107c41" /><path d="M6 17h18v5H6z" fill="#185c37" /><path d="M0 6h12v12H0z" fill="#107c41" /><path d="M3.500 8.800l5 7M8.500 8.800l-5 7" stroke="#fff" strokeWidth="1.600" /></App24>
      <App24 running><Chrome /><circle cx="18" cy="18" r="7" fill="#f1e2b4" /><circle cx="18" cy="18.500" r="4" fill="#d8b183" /><path d="M13.500 17q4.500-6 9 0l-2-1-2 1.500-2-1.500z" fill="#3d2c1d" /><path d="M15.500 18.500h1.500M19.500 18.500H21M17 21.500h3" stroke="#222" /></App24>
      <App24 running><circle cx="12" cy="12" r="11" fill="#7a2ca8" /><g transform="translate(4 4)"><FaGithub size={16} color="#fff" /></g></App24>
      <App24 running><path d="M17 0l7 3v18l-7 3z" fill="#a375e8" /><path d="M17 0v6L4 18l-4-2v-2z" fill="#8455cc" /><path d="M0 8l4-2 13 12v6L0 11z" fill="#6a3fb5" /><path d="M8 15.500h16V24H8z" fill="#ffc421" /><text x="16" y="22.500" textAnchor="middle" fontSize="6.500" fontWeight="bold" fill="#222" fontFamily="DejaVu Sans">PRE</text></App24>
      <Slot className="ml-[15px] w-[50px]"><Svg w={24}><circle cx="11" cy="12" r="11" fill="#fff" /><circle cx="11" cy="12" r="9.500" fill="#1493d6" /><path d="M7.500 9.500Q7.500 6 11 6t3.500 3q0 2-2.500 3-1 .5-1 2.500" stroke="#fff" strokeWidth="2.400" /><circle cx="11" cy="17.500" r="1.500" fill="#fff" /><circle cx="18.500" cy="17.500" r="4.500" fill="#f5a81c" /><path d="M18.500 14.500v1.200M18.500 16.500V20" stroke="#fff" strokeWidth="1.200" /></Svg></Slot>
      <Slot className="w-[31px]">
        <Svg w={25} className="-mt-[3px]">
          <circle cx="12.500" cy="14" r="10" fill="#f7941d" /><path d="M3 10h9a3 3 0 0 0 0-5A5 5 0 0 0 4 4a3.200 3.200 0 0 0-1 6z" fill="#b4cdf2" />
          <path d="M13 23h9a3 3 0 0 0 .5-6 4.200 4.200 0 0 0-8-.5 3.500 3.500 0 0 0-1.500 6.500z" fill="#c3d8f7" />
          <circle cx="18.500" cy="6" r="6" fill="#c92b1e" /><text x="18.500" y="9" textAnchor="middle" fontSize="8.500" fontWeight="bold" fill="#fff" fontFamily="Open Sans">5</text>
        </Svg>
      </Slot>
      <Slot className="w-[55px] text-[14px] tracking-[-0.400px]">34°C</Slot>
      <Slot className="w-[22px]"><Svg w={12} h={8}><path d="M.7 7L6 1.500 11.300 7" stroke="#fff" strokeWidth="1.300" /></Svg></Slot>
      <Slot className="w-[24px]"><Svg w={17}><path d="M12 14.500L1 13.500v-9L15.500 1v8" stroke="#fff" strokeWidth="1.200" /><path d="M5 8.500Q5.500 6 8 6q1.500 0 2.500 1.500M10.500 5v2.500H8M11 8.500Q10.500 11 8 11 6.500 11 5.500 9.500M5.500 12V9.500H8" stroke="#fff" /><circle cx="12.500" cy="12.500" r="3.500" fill="#ff9a0b" /></Svg></Slot>
      <Slot className="w-[27px]"><Svg w={17} h={13}><path d="M1 2v3.500h3.500V2M1.800 2V0M3.800 2V0M2.800 6v4.500h2M5.500 4.500h9v6h-9z" stroke="#fff" strokeWidth="1.100" /><path d="M7 6h6v3H7zM15 6h1.500v3H15z" fill="#fff" /></Svg></Slot>
      <Slot className="w-[21px]"><Svg w={14} h={13}><g stroke="#d8d8d8" strokeWidth="1.200"><path d="M.5 12.500Q1.500 2 12.500 1M3.500 12.500Q4.500 5 12.500 4M6.500 12.500Q7.500 8 12.500 7" /><path d="M9.500 12.500Q10 10.500 12.500 10" /></g><circle cx="12" cy="12" r="1" fill="#fff" /></Svg></Slot>
      <Slot className="w-[26px]"><Svg w={16} h={15}><path d="M4 0l3 2-3 2-3-2zM11.500 0l3 2-3 2-3-2zM4 4.500l3 2-3 2-3-2zM11.500 4.500l3 2-3 2-3-2zM10 9.500l3 1.500-3 2z" fill="#fff" /><rect x="0" y="6.500" width="8.500" height="8.500" rx="2.500" fill="#dc1028" /><text x="4.300" y="13.300" textAnchor="middle" fontSize="7" fontWeight="bold" fill="#fff" fontFamily="Open Sans">9</text></Svg></Slot>
      <Slot className={"w-[30px] tracking-[-0.500px] " + t}>ENG</Slot>
      <div className="flex w-[70px] shrink-0 flex-col items-center whitespace-nowrap text-[12px] leading-[18px] tracking-[-0.500px]"><span>04:16 PM</span><span>15-09-2025</span></div>
      <Slot className="ml-[12px] w-[36px]"><Svg w={16} h={16}><path d="M.6.6h14.800v12h-5L8 15.200 5.600 12.600h-5z" stroke="#fff" strokeWidth="1.200" /></Svg></Slot>
      <div className="h-10 w-px bg-[#8a7b88]" />
    </div>
  );
}

export default function App() {
  return (
    <div className="flex h-[768px] w-[1366px] flex-col overflow-hidden bg-[#101010] font-[Inter,sans-serif]">
      <TitleBar />
      <MenuBar />
      <MainToolbar />
      <div className="flex h-[627px] gap-[2px]">
        <div className="flex w-[999px] flex-col">
          <div className="flex h-[404px] gap-[2px]"><ScenePanel /><GamePanel /></div>
          <div className="mt-[2px] flex h-[221px] gap-[2px]"><Hierarchy /><Project /></div>
        </div>
        <Inspector />
      </div>
      <StatusBar />
      <Taskbar />
    </div>
  );
}
